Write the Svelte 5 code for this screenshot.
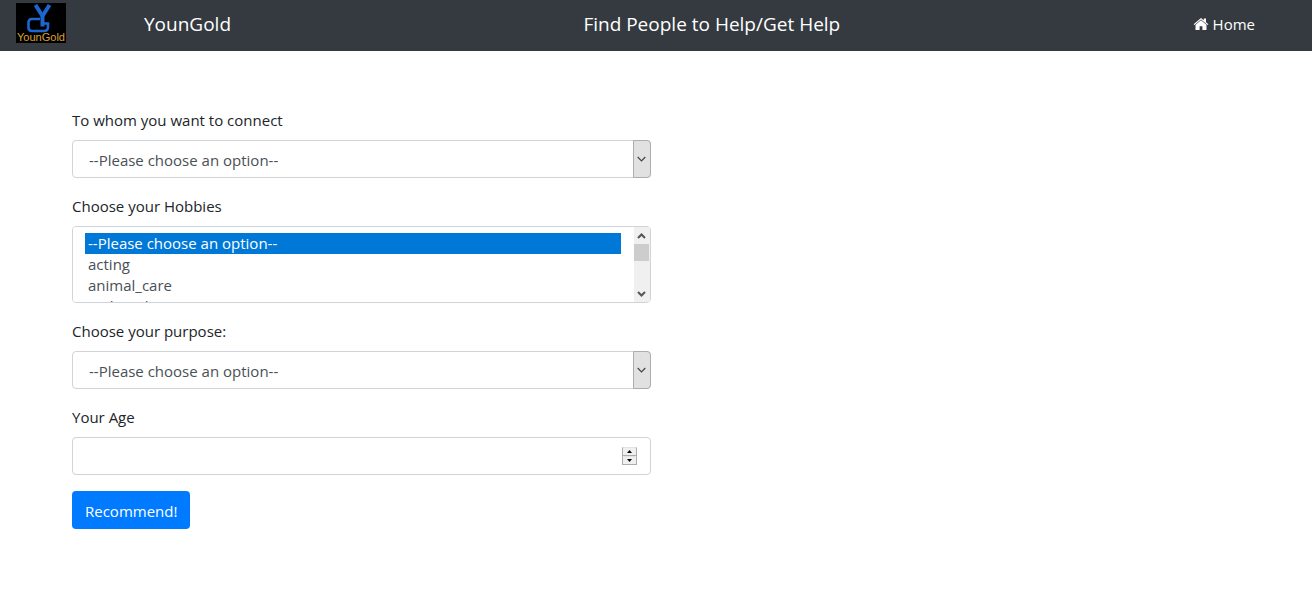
<script>
  const hobbies = ['acting', 'animal_care', 'archaeology', 'astronomy', 'baking', 'blogging', 'chess', 'cooking', 'dancing', 'drawing', 'gardening'];
  const people = ['Young', 'Senior'];
  const purposes = ['Get help', 'Give help'];
  const rowHeight = 21;

  let person = $state('');
  let chosen = $state(['']);
  let purpose = $state('');
  let age = $state(null);
  let list = $state();
  let progress = $state(0);

  function step(amount) {
    age = Math.max(0, (age ?? 0) + amount);
  }

  function scrollList(rows) {
    list.scrollTop += rows * rowHeight;
  }

  function trackScroll() {
    progress = list.scrollTop / Math.max(1, list.scrollHeight - list.clientHeight);
  }
</script>

<nav>
  <a class="logo" href="#home" aria-label="YounGold logo">
    <svg viewBox="0 0 50 40" width="50" height="40">
      <rect width="50" height="40" fill="#000" />
      <g fill="none" stroke="#1c66d2">
        <path d="M19.500 2L26.500 13" stroke-width="4" />
        <path d="M33.500 2L26.500 13V23.500" stroke-width="4" />
        <path d="M24 16H16q-3.500 0-3.500 3.500v5q0 3.500 3.500 3.500h12q4 0 4-4v-3.500H25" stroke-width="2.600" />
      </g>
      <text x="25" y="38" text-anchor="middle" font-family="Liberation Sans" font-size="11" fill="#dca032">YounGold</text>
    </svg>
  </a>
  <a class="brand" href="#home">YounGold</a>
  <h1>Find People to Help/Get Help</h1>
  <a class="home" href="#home">
    <svg viewBox="0 0 16 14" width="16" height="14" fill="#fff" aria-hidden="true">
      <path d="M8 3.200 2.500 7.800V12.500q0 .5.500.5H6.600V9.300H9.400V13H13q.5 0 .5-.5V7.800Z" />
      <path d="M.6 7.200 8 1l2.800 2.300V1.500H13v3.700l2.400 2-.8.900L8 2.500 1.400 8.100Z" />
    </svg>
    Home
  </a>
</nav>

<main>
  <form onsubmit={(e) => e.preventDefault()}>
    <div class="group">
      <label for="person">To whom you want to connect</label>
      <div class="field">
        <select id="person" class="control drop" bind:value={person}>
          <option value="">--Please choose an option--</option>
          {#each people as p}<option>{p}</option>{/each}
        </select>
        <span class="arrow" aria-hidden="true">
          <svg viewBox="0 0 9 6" width="9" height="6"><path d="M.7 1l3.800 3.800L8.300 1" /></svg>
        </span>
      </div>
    </div>

    <div class="group">
      <label for="hobbies">Choose your Hobbies</label>
      <div class="field">
        <select id="hobbies" class="control list" multiple size="3" bind:value={chosen} bind:this={list} onscroll={trackScroll}>
          <option value="">--Please choose an option--</option>
          {#each hobbies as h}<option value={h}>{h}</option>{/each}
        </select>
        <span class="scrollbar">
          <button type="button" aria-label="Scroll up" tabindex="-1" onclick={() => scrollList(-1)}>
            <svg viewBox="0 0 9 6" width="9" height="6"><path d="M1 5l3.500-3.500L8 5" /></svg>
          </button>
          <span class="track">
            <span style:flex-grow={progress}></span>
            <span class="thumb"></span>
            <span style:flex-grow={1 - progress}></span>
          </span>
          <button type="button" aria-label="Scroll down" tabindex="-1" onclick={() => scrollList(1)}>
            <svg viewBox="0 0 9 6" width="9" height="6"><path d="M1 1l3.500 3.500L8 1" /></svg>
          </button>
        </span>
      </div>
    </div>

    <div class="group">
      <label for="purpose">Choose your purpose:</label>
      <div class="field">
        <select id="purpose" class="control drop" bind:value={purpose}>
          <option value="">--Please choose an option--</option>
          {#each purposes as p}<option>{p}</option>{/each}
        </select>
        <span class="arrow" aria-hidden="true">
          <svg viewBox="0 0 9 6" width="9" height="6"><path d="M.7 1l3.800 3.800L8.300 1" /></svg>
        </span>
      </div>
    </div>

    <div class="group">
      <label for="age">Your Age</label>
      <div class="field">
        <input id="age" class="control" type="number" min="0" bind:value={age} />
        <span class="spinner">
          <button type="button" aria-label="Increase age" onclick={() => step(1)}>
            <svg viewBox="0 0 5 3" width="5" height="3"><path d="M0 3h5L2.500 0z" /></svg>
          </button>
          <button type="button" aria-label="Decrease age" onclick={() => step(-1)}>
            <svg viewBox="0 0 5 3" width="5" height="3"><path d="M0 0h5L2.500 3z" /></svg>
          </button>
        </span>
      </div>
    </div>

    <button class="submit" type="submit">Recommend!</button>
  </form>
</main>

<style>
  :global(body) {
    margin: 0;
    background: #fff;
    color: #212529;
    font: 15px/24px 'Open Sans', 'Noto Sans', sans-serif;
  }
  * {
    box-sizing: border-box;
  }
  nav {
    display: flex;
    align-items: center;
    padding: 3px 57px 8px 16px;
    background: #343a40;
    color: #fff;
  }
  nav a {
    color: #fff;
    text-decoration: none;
  }
  .logo svg {
    display: block;
  }
  .brand,
  h1,
  .home {
    padding-top: 2px;
  }
  .brand {
    margin-left: 78px;
    font-size: 19px;
  }
  h1 {
    flex: 1;
    margin: 0;
    text-align: center;
    font-size: 19px;
    font-weight: 400;
  }
  .home {
    display: flex;
    align-items: center;
    gap: 4px;
  }
  main {
    padding: 57px 72px;
  }
  form {
    width: 50%;
    max-width: 579px;
  }
  .group {
    margin-bottom: 16px;
  }
  label {
    display: block;
    width: fit-content;
    margin-bottom: 8px;
  }
  .field {
    position: relative;
  }
  .control {
    display: block;
    width: 100%;
    height: 38px;
    margin: 0;
    padding: 6px 12px;
    border: 1px solid #ced4da;
    border-radius: 4px;
    background: #fff;
    color: #495057;
    font: inherit;
    outline: none;
  }
  .control:focus-visible {
    border-color: #80bdff;
  }
  .drop {
    appearance: none;
    padding: 6px 32px 4px 16px;
  }
  .arrow {
    position: absolute;
    top: 0;
    right: 0;
    bottom: 0;
    display: grid;
    place-items: center;
    width: 18px;
    padding-right: 2px;
    border: 1px solid #adadad;
    border-radius: 0 4px 4px 0;
    background: #e1e1e1;
    pointer-events: none;
  }
  .arrow path {
    fill: none;
    stroke: #444;
    stroke-width: 1.2;
  }
  .list {
    height: 77px;
    padding-right: 29px;
    overflow-y: scroll;
    scrollbar-width: none;
  }
  .list option {
    min-height: 21px;
    padding: 0 3px;
    line-height: 21px;
  }
  .list option:checked {
    background: linear-gradient(#0078d7, #0078d7);
    color: #fff;
    -webkit-text-fill-color: #fff;
  }
  .scrollbar {
    position: absolute;
    top: 1px;
    right: 1px;
    bottom: 1px;
    display: flex;
    flex-direction: column;
    width: 16px;
    background: #f0f0f0;
  }
  .scrollbar button {
    display: grid;
    place-items: center;
    height: 17px;
    padding: 0 1px 0 0;
    border: 0;
    background: none;
  }
  .scrollbar path {
    fill: none;
    stroke: #555;
    stroke-width: 2;
  }
  .track {
    display: flex;
    flex: 1;
    flex-direction: column;
  }
  .thumb {
    height: 17px;
    margin-right: 1px;
    background: #cdcdcd;
  }
  input[type='number'] {
    appearance: textfield;
    padding-right: 36px;
  }
  .spinner {
    position: absolute;
    top: 10px;
    right: 14px;
    display: grid;
    width: 15px;
  }
  .spinner button {
    display: grid;
    place-items: center;
    height: 9px;
    padding: 0;
    border: 1px solid #adadad;
    border-top-color: #e3e3e3;
    background: #f0f0f0;
  }
  .submit {
    height: 38px;
    padding: 2px 13px 0;
    border: 0;
    border-radius: 4px;
    background: #007bff;
    color: #fff;
    font: inherit;
    cursor: pointer;
  }
</style>
